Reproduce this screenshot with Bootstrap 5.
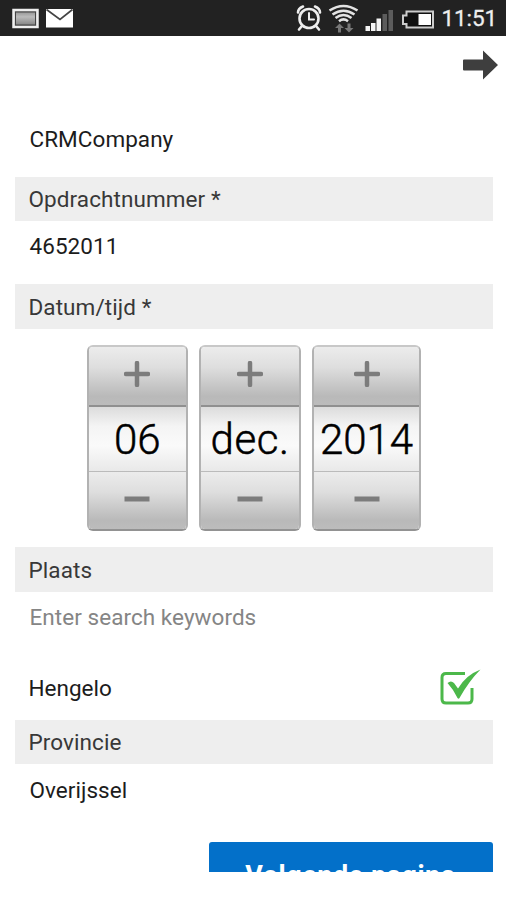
<!DOCTYPE html>
<html lang="nl">
<head>
<meta charset="utf-8">
<meta name="viewport" content="width=device-width, initial-scale=1">
<title>Opdracht</title>
<link href="https://cdn.jsdelivr.net/npm/bootstrap@5.3.0/dist/css/bootstrap.min.css" rel="stylesheet">
<style>
body { font-family: Roboto, "Liberation Sans", sans-serif; font-size: 22.5px; line-height: 1; color: #1c1c1c; }
.screen { height: 872px; }
.statusbar { height: 35.5px; background: #222; padding: 0 9px 0 11px; }
.clock { font-size: 22.5px; font-weight: 400; color: #eee; -webkit-text-stroke: .3px #eee; letter-spacing: -.1px; }
.actionbar { height: 66px; padding: 13px 7px 0 0; }
.form-area { padding: 0 13.5px 0 14.5px; }
.field-label { height: 44.5px; background: #eee; padding: 1px 14px 0; color: #383838; letter-spacing: .08px; }
.field-value { padding: 0 15px; letter-spacing: .05px; }
.h-company { height: 75px; }
.h-number { height: 63px; padding-bottom: 12px; }
.h-search { height: 54px; padding-bottom: 3px; }
.h-city { height: 74px; padding: 11px 12px 0 14px; }
.h-province { height: 77.5px; padding-bottom: 26px; }
.search-hint { color: #858585; }
.picker { height: 218.5px; gap: 11.4px; padding: 16.5px 0 0 72px; }
.wheel { width: 101.5px; height: 186px; border: 2px solid #b2b2b2; border-top-color: #c8c8c8; border-bottom-color: #929292; border-radius: 6px; overflow: hidden; }
.wheel-year { width: 108.5px; }
.step { background: linear-gradient(#ececec, #dedede 35%, #b9b9b9 85%, #bcbcbc); border: 0; padding: 0 0 4px; }
.step-up { height: 58px; }
.wheel-value { height: 67px; border-top: 2px solid #909090; border-bottom: 1px solid #bbb; background: linear-gradient(#dcdcdc, #f4f4f4 30%, #fafafa 60%, #e9e9e9); font-size: 42px; font-weight: 300; color: #000; -webkit-text-stroke: .5px #000; padding-top: 2px; }
.wheel-month { letter-spacing: .6px; }
.next-btn { width: 284px; height: 60px; background: #0370c9; color: #fff; font-size: 27px; font-weight: 700; line-height: 1; letter-spacing: .5px; border-radius: 3px; padding: 20px 0 0; }
</style>
<script src="https://cdn.jsdelivr.net/npm/bootstrap@5.3.0/dist/js/bootstrap.bundle.min.js"></script>
</head>
<body class="bg-white">
<div class="screen overflow-hidden">
  <header class="statusbar d-flex align-items-center justify-content-between">
    <div class="d-flex">
      <svg width="66" height="24" viewBox="0 0 66 24">
        <defs><linearGradient id="pic" x2="0" y2="1"><stop stop-color="#888"/><stop offset=".4" stop-color="#bbb"/><stop offset="1" stop-color="#777"/></linearGradient></defs>
        <rect x="2.500" y="4" width="24" height="17" fill="url(#pic)" stroke="#eee" stroke-width="2.500"/>
        <rect x="4.500" y="6" width="20" height="13" fill="none" stroke="#444"/>
        <rect x="35" y="3" width="27" height="18.500" fill="#fff"/>
        <path d="M35.500 3.500 49 13.500 61.500 3.500" fill="none" stroke="#444" stroke-width="1.700"/>
      </svg>
    </div>
    <div class="d-flex align-items-center">
      <svg width="146" height="34" viewBox="296 0 146 34">
        <g fill="none" stroke="#eee" stroke-width="2.600" stroke-linecap="round">
          <circle cx="310" cy="17.500" r="9.500"/>
          <path d="M310 12v6.500h5" stroke-width="2"/>
          <path d="M299 11.500q0-4 5-6M321 11.500q0-4-5-6M302.500 25.500 300 28.500M317.500 25.500l2.500 3"/>
        </g>
        <g fill="none" stroke="#e4e4e4" stroke-width="2.500">
          <path d="M330.500 9.500q14-9 28 0M333.500 13.500q11-7.500 22 0M336.500 17q8-6 16 0M340 20.200q4.500-3.600 9 0"/>
        </g>
        <path d="m340.500 22.500 4.500 4.500h-3v4.500h-3V27h-3zM350 31.500l-4.500-4.500h3v-4.500h3V27h3z" fill="#777"/>
        <path d="M366.500 25h4.500v5h-4.500zM372 22h4.500v8H372zM377.500 17.500h4.500V30h-4.500z" fill="#f4f4f4"/>
        <path d="M383.500 13h4.500v17h-4.500zM389.500 9h4.500v21h-4.500z" fill="#5c5c5c"/>
        <path d="M407.500 10.500H434v16h-26.500v-3.500H404v-8.500h3.500z" fill="#111" stroke="#ccc" stroke-width="2"/>
        <path d="M419.500 13H432v11h-12.500z" fill="#fff"/>
      </svg>
      <span class="clock">11:51</span>
    </div>
  </header>

  <div class="actionbar d-flex justify-content-end align-items-start">
    <svg width="38" height="32" viewBox="0 0 38 32"><path d="M3 10.500h19V1.500L37 16 22 30.500v-9H3q-1 0-1-1v-9q0-1 1-1z" fill="#3e3e3e"/></svg>
  </div>

  <main class="form-area">
    <div class="field-value h-company d-flex align-items-center">CRMCompany</div>
    <div class="field-label d-flex align-items-center">Opdrachtnummer *</div>
    <div class="field-value h-number d-flex align-items-center">4652011</div>
    <div class="field-label d-flex align-items-center">Datum/tijd *</div>

    <div class="picker d-flex">
      <div class="wheel d-flex flex-column">
        <button class="step step-up d-flex align-items-center justify-content-center" aria-label="+"><svg width="26" height="26" viewBox="0 0 26 26"><path d="M13 2v22M2 13h22" stroke="#7c7c7c" stroke-width="4.500" stroke-linecap="round"/></svg></button>
        <div class="wheel-value d-flex align-items-center justify-content-center">06</div>
        <button class="step flex-fill d-flex align-items-center justify-content-center" aria-label="-"><svg width="26" height="6" viewBox="0 0 26 6"><path d="M.5 3h25" stroke="#7c7c7c" stroke-width="4.800"/></svg></button>
      </div>
      <div class="wheel d-flex flex-column">
        <button class="step step-up d-flex align-items-center justify-content-center" aria-label="+"><svg width="26" height="26" viewBox="0 0 26 26"><path d="M13 2v22M2 13h22" stroke="#7c7c7c" stroke-width="4.500" stroke-linecap="round"/></svg></button>
        <div class="wheel-value wheel-month d-flex align-items-center justify-content-center">dec.</div>
        <button class="step flex-fill d-flex align-items-center justify-content-center" aria-label="-"><svg width="26" height="6" viewBox="0 0 26 6"><path d="M.5 3h25" stroke="#7c7c7c" stroke-width="4.800"/></svg></button>
      </div>
      <div class="wheel wheel-year d-flex flex-column">
        <button class="step step-up d-flex align-items-center justify-content-center" aria-label="+"><svg width="26" height="26" viewBox="0 0 26 26"><path d="M13 2v22M2 13h22" stroke="#7c7c7c" stroke-width="4.500" stroke-linecap="round"/></svg></button>
        <div class="wheel-value d-flex align-items-center justify-content-center">2014</div>
        <button class="step flex-fill d-flex align-items-center justify-content-center" aria-label="-"><svg width="26" height="6" viewBox="0 0 26 6"><path d="M.5 3h25" stroke="#7c7c7c" stroke-width="4.800"/></svg></button>
      </div>
    </div>

    <div class="field-label d-flex align-items-center">Plaats</div>
    <div class="field-value h-search search-hint d-flex align-items-center">Enter search keywords</div>
    <div class="h-city d-flex align-items-center justify-content-between">
      <span>Hengelo</span>
      <svg width="42" height="38" viewBox="0 0 42 38">
        <path d="M26 4.500H7Q3 4.500 3 8.500V30q0 4 4 4h22q4 0 4-4V19" fill="none" stroke="#4cb84a" stroke-width="3"/>
        <path d="M8.500 14q3.500-3 6.500 0l4 5.500Q27 6 41.500.500 30 12 20.500 29q-1 1.500-2 0Q14.500 20.500 8.500 14z" fill="#4cb84a"/>
      </svg>
    </div>
    <div class="field-label d-flex align-items-center">Provincie</div>
    <div class="field-value h-province d-flex align-items-center">Overijssel</div>
    <div class="d-flex justify-content-end">
      <button class="btn next-btn d-flex justify-content-center align-items-start">Volgende pagina</button>
    </div>
  </main>
</div>
</body>
</html>
